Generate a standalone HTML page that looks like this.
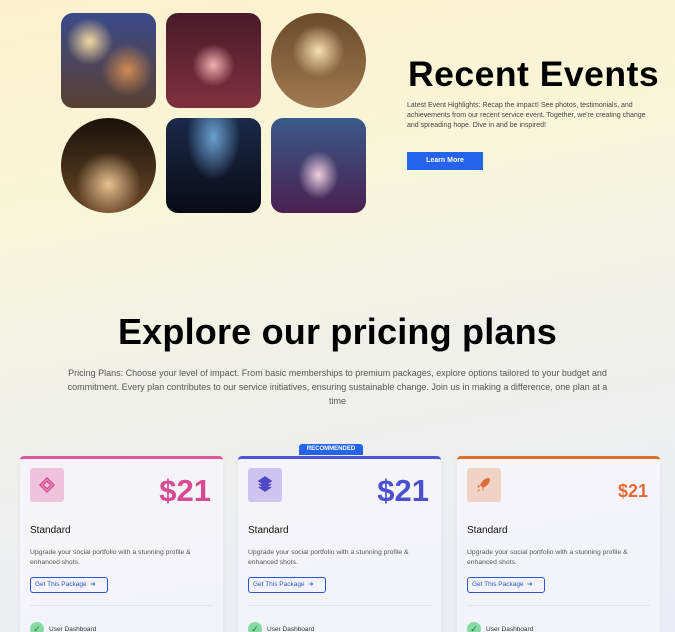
<!DOCTYPE html><html style="background:#eaedf7"><head><style>
*{margin:0;padding:0;box-sizing:border-box}
html,body{width:675px;height:632px;overflow:hidden}
body{font-family:"Liberation Sans",sans-serif;background:linear-gradient(170deg,#fcf0cf 0%,#f8f6d8 30%,#f0f0ea 55%,#eaedf7 100%);position:relative}
.im{position:absolute;width:95px;height:95px;border-radius:12px;overflow:hidden}
.c{border-radius:50%}
h1{position:absolute;left:408px;top:54px;font-size:35.5px;font-weight:bold;color:#000;letter-spacing:.5px;white-space:nowrap}
.p1{position:absolute;left:407px;top:101px;width:250px;font-size:7px;line-height:10px;color:#444}
.btn{position:absolute;left:407px;top:152px;width:76px;height:18px;background:#2563eb;color:#fff;font-size:7px;font-weight:bold;text-align:center;line-height:18px}
h2{position:absolute;left:0;width:675px;top:311px;text-align:center;font-size:36px;font-weight:bold;color:#000;letter-spacing:.2px}
.p2{position:absolute;left:65px;width:545px;top:366px;text-align:center;font-size:9px;line-height:14px;color:#555}
.card{position:absolute;top:456px;width:203px;height:180px;background:rgba(245,246,252,.75);border-top:3px solid;border-radius:4px;box-shadow:0 2px 6px rgba(0,0,0,.05)}
.ib{position:absolute;left:10px;top:9px;width:34px;height:34px;border-radius:3px}
.pr{position:absolute;right:12px;top:14px;font-size:31px;font-weight:bold}
.st{position:absolute;left:10px;top:66px;font-size:10px;color:#111}
.d{position:absolute;left:10px;top:89px;width:178px;font-size:6.8px;line-height:10px;color:#555}
.gb{position:absolute;left:10px;top:118px;width:78px;height:16px;border:1px solid #2a55c8;border-radius:3px;font-size:6.5px;color:#2a55c8;line-height:14px;padding-left:4px}
.hr{position:absolute;left:10px;right:10px;top:146px;border-top:1px solid #e3e5ec}
.ck{position:absolute;left:10px;top:163px;width:14px;height:14px;border-radius:50%;background:#86d9a3;color:#1a7a3a;font-size:9px;text-align:center;line-height:14px}
.ud{position:absolute;left:29px;top:167px;font-size:6.5px;color:#333}
.rec{position:absolute;left:299px;top:444px;width:64px;height:11px;background:#2563eb;color:#fff;font-size:6px;font-weight:bold;text-align:center;line-height:11px;border-radius:3px 3px 0 0;z-index:2}
</style></head><body>
<div class="im" style="left:61px;top:13px;background:radial-gradient(circle at 30% 30%,#f3d9a0 0,transparent 25%),radial-gradient(circle at 70% 60%,#d08a50 0,transparent 30%),linear-gradient(#3a4a8a,#5a4030)"></div>
<div class="im" style="left:166px;top:13px;background:radial-gradient(circle at 50% 55%,#f0b0b0 0,transparent 30%),linear-gradient(#4a1a2a,#803040)"></div>
<div class="im c" style="left:271px;top:13px;background:radial-gradient(circle at 50% 40%,#f5e0b0 0,transparent 35%),linear-gradient(#6a4a2a,#a07a50)"></div>
<div class="im c" style="left:61px;top:118px;background:radial-gradient(circle at 50% 70%,#e8c090 0,transparent 40%),linear-gradient(#1a1208,#6a4828)"></div>
<div class="im" style="left:166px;top:118px;background:radial-gradient(ellipse at 50% 20%,#6aa0d0 0,transparent 40%),linear-gradient(#1a2a4a,#0a0a15)"></div>
<div class="im" style="left:271px;top:118px;background:radial-gradient(ellipse at 50% 60%,#f0d0e0 0,transparent 30%),linear-gradient(#3a5a8a,#4a2050)"></div>
<h1>Recent Events</h1>
<div class="p1">Latest Event Highlights: Recap the impact! See photos, testimonials, and achievements from our recent service event. Together, we're creating change and spreading hope. Dive in and be inspired!</div>
<div class="btn">Learn More</div>
<h2>Explore our pricing plans</h2>
<div class="p2">Pricing Plans: Choose your level of impact. From basic memberships to premium packages, explore options tailored to your budget and commitment. Every plan contributes to our service initiatives, ensuring sustainable change. Join us in making a difference, one plan at a time</div>
<div class="rec">RECOMMENDED</div>
<div class="card" style="left:20px;border-color:#e0559b"><div class="ib" style="background:#efc3dc"><svg width="34" height="34" viewBox="0 0 34 34"><path d="M17 10l7 7-7 7-7-7z M17 13l4 4-4 4-4-4z" fill="none" stroke="#d84a92" stroke-width="1.5"/></svg></div><div class="pr" style="color:#d84a92">$21</div><div class="st">Standard</div><div class="d">Upgrade your social portfolio with a stunning profile &amp; enhanced shots.</div><div class="gb">Get This Package &nbsp;➔</div><div class="hr"></div><div class="ck">✓</div><div class="ud">User Dashboard</div></div>
<div class="card" style="left:238px;border-color:#4a56d6"><div class="ib" style="background:#cdc5f0"><svg width="34" height="34" viewBox="0 0 34 34"><path d="M17 9l6 4-6 4-6-4z M11 16l6 4 6-4 M11 19l6 4 6-4" fill="#5047c8" stroke="#5047c8" stroke-width="1.5"/></svg></div><div class="pr" style="color:#4a50d0">$21</div><div class="st">Standard</div><div class="d">Upgrade your social portfolio with a stunning profile &amp; enhanced shots.</div><div class="gb">Get This Package &nbsp;➔</div><div class="hr"></div><div class="ck">✓</div><div class="ud">User Dashboard</div></div>
<div class="card" style="left:457px;border-color:#e0702e"><div class="ib" style="background:#f0d3c4"><svg width="34" height="34" viewBox="0 0 34 34"><path d="M22 10c-4 0-7 3-9 7l3 3c4-2 7-5 7-9z M13 17l-3 1 2 2z M16 20l-1 3 2-2z M12 21l-2 3 3-2z" fill="#e06a3a"/></svg></div><div class="pr" style="color:#e06a3a;font-size:18px;top:22px">$21</div><div class="st">Standard</div><div class="d">Upgrade your social portfolio with a stunning profile &amp; enhanced shots.</div><div class="gb">Get This Package &nbsp;➔</div><div class="hr"></div><div class="ck">✓</div><div class="ud">User Dashboard</div></div>
</body></html>
